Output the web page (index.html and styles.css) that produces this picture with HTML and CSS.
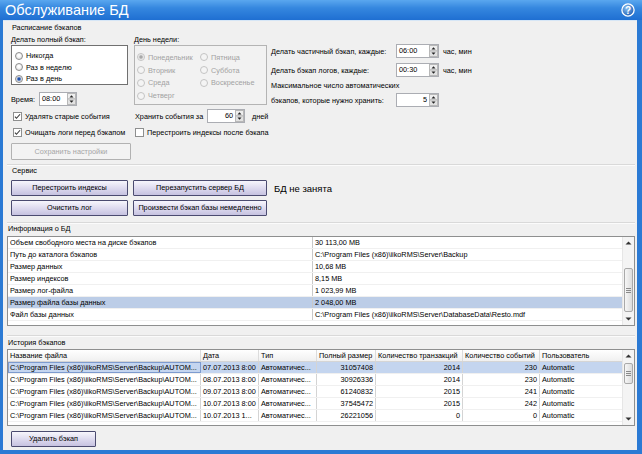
FILE: index.html
```html
<!DOCTYPE html>
<html lang="ru">
<head>
<meta charset="utf-8">
<title>Обслуживание БД</title>
<link rel="stylesheet" href="styles.css">
</head>
<body>
<div class="window">
  <div class="titlebar">
    <span class="title">Обслуживание БД</span>
    <svg class="help" width="14" height="14" viewBox="0 0 14 14"><defs><radialGradient id="hg" cx="40%" cy="35%" r="70%"><stop offset="0" stop-color="#8cc2f3"/><stop offset="1" stop-color="#1a58b0"/></radialGradient></defs><circle cx="7" cy="7" r="6.1" fill="url(#hg)" stroke="#fff" stroke-width="1.3"/><text x="7" y="10.6" text-anchor="middle" font-size="10" font-weight="bold" fill="#fff" font-family="Liberation Sans, sans-serif">?</text></svg>
  </div>
  <div class="body">
    <section class="sec sched">
      <div class="sec-title">Расписание бэкапов</div>
      <div class="sched-top">
        <div class="col1">
          <div class="lbl">Делать полный бэкап:</div>
          <div class="radiobox">
            <div class="radio"><span class="rb"></span>Никогда</div>
            <div class="radio"><span class="rb"></span>Раз в неделю</div>
            <div class="radio"><span class="rb on"></span>Раз в день</div>
          </div>
          <div class="time-row">
            <span class="time-lbl">Время:</span>
            <div class="spin w38"><span class="val">08:00</span><svg class="arr" viewBox="0 0 9 12" width="9" height="12"><rect x="0.5" y="0.5" width="8" height="5.5" fill="#eeeeee" stroke="#b8b8b8"/><rect x="0.5" y="6" width="8" height="5.5" fill="#e2e2e2" stroke="#b8b8b8"/><path d="M2.5 4.6h4L4.5 2.2z" fill="#222"/><path d="M2.5 7.4h4L4.5 9.8z" fill="#222"/></svg></div>
          </div>
        </div>
        <div class="col2">
          <div class="lbl">День недели:</div>
          <div class="daybox">
            <div class="daycol">
              <div class="radio dis"><span class="rb on"></span>Понедельник</div>
              <div class="radio dis"><span class="rb"></span>Вторник</div>
              <div class="radio dis"><span class="rb"></span>Среда</div>
              <div class="radio dis"><span class="rb"></span>Четверг</div>
            </div>
            <div class="daycol">
              <div class="radio dis"><span class="rb"></span>Пятница</div>
              <div class="radio dis"><span class="rb"></span>Суббота</div>
              <div class="radio dis"><span class="rb"></span>Воскресенье</div>
            </div>
          </div>
        </div>
        <div class="col3">
          <div class="set-row">
            <span class="set-lbl">Делать частичный бэкап, каждые:</span>
            <div class="spin w43"><span class="val">06:00</span><svg class="arr" viewBox="0 0 9 12" width="9" height="12"><rect x="0.5" y="0.5" width="8" height="5.5" fill="#eeeeee" stroke="#b8b8b8"/><rect x="0.5" y="6" width="8" height="5.5" fill="#e2e2e2" stroke="#b8b8b8"/><path d="M2.5 4.6h4L4.5 2.2z" fill="#222"/><path d="M2.5 7.4h4L4.5 9.8z" fill="#222"/></svg></div>
            <span class="unit">час, мин</span>
          </div>
          <div class="set-row r2">
            <span class="set-lbl">Делать бэкап логов, каждые:</span>
            <div class="spin w43"><span class="val">00:30</span><svg class="arr" viewBox="0 0 9 12" width="9" height="12"><rect x="0.5" y="0.5" width="8" height="5.5" fill="#eeeeee" stroke="#b8b8b8"/><rect x="0.5" y="6" width="8" height="5.5" fill="#e2e2e2" stroke="#b8b8b8"/><path d="M2.5 4.6h4L4.5 2.2z" fill="#222"/><path d="M2.5 7.4h4L4.5 9.8z" fill="#222"/></svg></div>
            <span class="unit">час, мин</span>
          </div>
          <div class="set-text">Максимальное число автоматических</div>
          <div class="set-row r4">
            <span class="set-lbl">бэкапов, которые нужно хранить:</span>
            <div class="spin w43"><span class="val num">5</span><svg class="arr" viewBox="0 0 9 12" width="9" height="12"><rect x="0.5" y="0.5" width="8" height="5.5" fill="#eeeeee" stroke="#b8b8b8"/><rect x="0.5" y="6" width="8" height="5.5" fill="#e2e2e2" stroke="#b8b8b8"/><path d="M2.5 4.6h4L4.5 2.2z" fill="#222"/><path d="M2.5 7.4h4L4.5 9.8z" fill="#222"/></svg></div>
          </div>
        </div>
      </div>
      <div class="chk-row1">
        <div class="chk c-a"><span class="cb"><svg viewBox="0 0 9 9" width="7" height="7"><path d="M1.2 4.6l2 2.2L7.8 1.6" fill="none" stroke="#3a3a3a" stroke-width="1.4"/></svg></span>Удалять старые события</div>
        <span class="keep-lbl">Хранить события за</span>
        <div class="spin w38"><span class="val num">60</span><svg class="arr" viewBox="0 0 9 12" width="9" height="12"><rect x="0.5" y="0.5" width="8" height="5.5" fill="#eeeeee" stroke="#b8b8b8"/><rect x="0.5" y="6" width="8" height="5.5" fill="#e2e2e2" stroke="#b8b8b8"/><path d="M2.5 4.6h4L4.5 2.2z" fill="#222"/><path d="M2.5 7.4h4L4.5 9.8z" fill="#222"/></svg></div>
        <span class="days">дней</span>
      </div>
      <div class="chk-row2">
        <div class="chk c-a"><span class="cb"><svg viewBox="0 0 9 9" width="7" height="7"><path d="M1.2 4.6l2 2.2L7.8 1.6" fill="none" stroke="#3a3a3a" stroke-width="1.4"/></svg></span>Очищать логи перед бэкапом</div>
        <div class="chk"><span class="cb"></span>Перестроить индексы после бэкапа</div>
      </div>
      <div class="btn disabled save">Сохранить настройки</div>
    </section>

    <section class="sec service">
      <div class="sec-title">Сервис</div>
      <div class="svc-grid">
        <div class="btn">Перестроить индексы</div>
        <div class="btn">Перезапустить сервер БД</div>
        <div class="status">БД не занята</div>
        <div class="btn">Очистить лог</div>
        <div class="btn">Произвести бэкап базы немедленно</div>
      </div>
    </section>

    <section class="sec info">
      <div class="sec-title">Информация о БД</div>
      <div class="grid info-grid">
        <div class="rows">
          <div class="irow"><span>Объем свободного места на диске бэкапов</span><span>30 113,00 MB</span></div>
          <div class="irow"><span>Путь до каталога бэкапов</span><span>C:\Program Files (x86)\iikoRMS\Server\Backup</span></div>
          <div class="irow"><span>Размер данных</span><span>10,68 MB</span></div>
          <div class="irow"><span>Размер индексов</span><span>8,15 MB</span></div>
          <div class="irow"><span>Размер лог-файла</span><span>1 023,99 MB</span></div>
          <div class="irow sel"><span>Размер файла базы данных</span><span>2 048,00 MB</span></div>
          <div class="irow"><span>Файл базы данных</span><span>C:\Program Files (x86)\iikoRMS\Server\DatabaseData\Resto.mdf</span></div>
        </div>
        <div class="vscroll info-sb">
          <div class="sb-btn"><svg width="7" height="4" viewBox="0 0 7 4"><path d="M0.5 3.5h6L3.5 0.5z" fill="#333"/></svg></div>
          <div class="sb-thumb"><svg width="5" height="5" viewBox="0 0 5 5"><path d="M0 0.5h5M0 2.5h5M0 4.5h5" stroke="#8a8a8a" stroke-width="1"/></svg></div>
          <div class="sb-space"></div>
          <div class="sb-btn"><svg width="7" height="4" viewBox="0 0 7 4"><path d="M0.5 0.5h6L3.5 3.5z" fill="#333"/></svg></div>
        </div>
      </div>
    </section>

    <section class="sec history">
      <div class="sec-title">История бэкапов</div>
      <div class="grid hist-grid">
        <div class="rows">
          <div class="hrow head"><span>Название файла</span><span>Дата</span><span>Тип</span><span>Полный размер</span><span>Количество транзакций</span><span>Количество событий</span><span>Пользователь</span></div>
          <div class="hrow sel"><span class="focus">C:\Program Files (x86)\iikoRMS\Server\Backup\AUTOM...</span><span>07.07.2013 8:00</span><span>Автоматичес...</span><span class="n">31057408</span><span class="n">2014</span><span class="n">230</span><span>Automatic</span></div>
          <div class="hrow"><span>C:\Program Files (x86)\iikoRMS\Server\Backup\AUTOM...</span><span>08.07.2013 8:00</span><span>Автоматичес...</span><span class="n">30926336</span><span class="n">2014</span><span class="n">230</span><span>Automatic</span></div>
          <div class="hrow"><span>C:\Program Files (x86)\iikoRMS\Server\Backup\AUTOM...</span><span>09.07.2013 8:00</span><span>Автоматичес...</span><span class="n">61240832</span><span class="n">2015</span><span class="n">241</span><span>Automatic</span></div>
          <div class="hrow"><span>C:\Program Files (x86)\iikoRMS\Server\Backup\AUTOM...</span><span>10.07.2013 8:00</span><span>Автоматичес...</span><span class="n">37545472</span><span class="n">2015</span><span class="n">242</span><span>Automatic</span></div>
          <div class="hrow"><span>C:\Program Files (x86)\iikoRMS\Server\Backup\AUTOM...</span><span>10.07.2013 1...</span><span>Автоматичес...</span><span class="n">26221056</span><span class="n">0</span><span class="n">0</span><span>Automatic</span></div>
        </div>
        <div class="vscroll hist-sb">
          <div class="sb-btn"><svg width="7" height="4" viewBox="0 0 7 4"><path d="M0.5 3.5h6L3.5 0.5z" fill="#333"/></svg></div>
          <div class="sb-thumb"><svg width="5" height="5" viewBox="0 0 5 5"><path d="M0 0.5h5M0 2.5h5M0 4.5h5" stroke="#8a8a8a" stroke-width="1"/></svg></div>
          <div class="sb-space"></div>
          <div class="sb-btn"><svg width="7" height="4" viewBox="0 0 7 4"><path d="M0.5 0.5h6L3.5 3.5z" fill="#333"/></svg></div>
        </div>
      </div>
      <div class="btn del">Удалить бэкап</div>
    </section>
  </div>
</div>
</body>
</html>
```
FILE: styles.css
```css
* { box-sizing: border-box; }
html, body { margin: 0; padding: 0; }
body {
  width: 642px; height: 454px; overflow: hidden;
  font-family: "Liberation Sans", Arial, sans-serif;
  font-size: 7.3px; color: #000;
}
.window {
  width: 642px; height: 454px;
  background: #2b7ad4;
  display: flex; flex-direction: column;
}
.titlebar {
  height: 20px; flex: none;
  display: flex; align-items: center; justify-content: space-between;
  padding: 0 7px 0 5px;
  background: linear-gradient(#5aa7ef 0%, #3587df 40%, #1f6fd2 100%);
  color: #fff;
}
.title { font-size: 14.5px; line-height: 20px; }
.help { display: block; }
.body {
  margin: 0 5px 4px 3px;
  height: 430px;
  background: #f0f0f0;
  padding: 0 2px 0 4px;
  border-top: 1px solid #d6e6f6;
}
.sec-title { height: 12px; line-height: 12px; padding-left: 1px; white-space: nowrap; }
.sec + .sec { border-top: 1px solid #d9d9d9; box-shadow: inset 0 1px #fbfbfb; }

/* schedule */
.sched { padding: 1px 0 3px 4px; height: 143px; }
.sched-top { display: flex; height: 73px; }
.lbl { height: 11px; line-height: 11px; white-space: nowrap; }
.col1 { width: 117px; }
.col2 { width: 133px; margin-left: 6px; }
.col3 { margin-left: 4px; padding-top: 10px; }
.radiobox {
  height: 40px; background: #fff; border: 1px solid #707070;
  padding: 4px 0 0 3px;
}
.radio { display: flex; align-items: center; height: 11.5px; white-space: nowrap; }
.rb {
  width: 8px; height: 8px; border-radius: 50%;
  border: 1px solid #8c8c8c;
  background: radial-gradient(circle at 50% 40%, #ffffff 20%, #d6d6d6 100%);
  margin-right: 3px; flex: none;
}
.rb.on { background: radial-gradient(circle, #1f4fa8 0 28%, #7c9ad0 40%, #e0e0e0 60%, #f4f4f4 100%); }
.radio.dis { color: #a2a2a2; height: 12.8px; }
.radio.dis .rb { border-color: #c4c4c4; background: #f4f4f4; }
.radio.dis .rb.on { background: radial-gradient(circle, #a8a8a8 0 30%, #d8d8d8 45%, #f4f4f4 70%); }
.daybox {
  height: 60px; border: 1px solid #b4b4b4; background: #f2f2f2;
  padding: 5px 0 0 2px; display: flex;
}
.daycol { width: 63px; }
.daycol + .daycol { width: auto; }
.time-row { display: flex; align-items: center; margin-top: 7px; height: 14px; }
.time-lbl { width: 28px; }
.spin {
  display: flex; height: 14px; background: #fff;
  border: 1px solid #abadb3; flex: none;
}
.spin .val { flex: 1; line-height: 12px; padding-left: 2px; }
.spin .val.num { text-align: right; padding-right: 2px; }
.spin .arr { display: block; flex: none; }
.w38 { width: 38px; }
.w43 { width: 43px; }
.set-row { display: flex; align-items: center; height: 14px; }
.set-row.r2 { margin-top: 5px; }
.set-row.r4 { margin-top: 1px; }
.set-lbl { width: 125px; white-space: nowrap; }
.unit { margin-left: 4px; white-space: nowrap; }
.set-text { height: 12px; line-height: 12px; margin-top: 3px; white-space: nowrap; }
.chk-row1 { display: flex; align-items: center; height: 14px; margin-top: 2px; padding-left: 2px; }
.chk-row2 { display: flex; align-items: center; height: 12px; margin-top: 3px; padding-left: 2px; }
.chk { display: flex; align-items: center; white-space: nowrap; }
.c-a { width: 122px; }
.cb {
  width: 9px; height: 9px; background: #fff; border: 1px solid #8e8f8f;
  margin-right: 3px; display: flex; align-items: center; justify-content: center; flex: none;
}
.cb svg { display: block; }
.keep-lbl { width: 72px; white-space: nowrap; }
.days { margin-left: 7px; }

.btn {
  height: 16px; line-height: 14px; text-align: center; white-space: nowrap;
  border: 1px solid #4b4b70; border-radius: 1px;
  background: linear-gradient(#f7f6fc 0%, #dedbef 50%, #c6c2e0 100%);
}
.btn.disabled { border-color: #b2b2b2; background: #f3f3f3; color: #a6a6a6; }
.save { width: 120px; height: 17px; line-height: 15px; margin-top: 5px; }

/* service */
.service { height: 58px; padding-left: 4px; }
.svc-grid {
  display: grid; grid-template-columns: 117px 134px auto;
  column-gap: 5px; row-gap: 4px; margin-top: 3px; align-items: center;
}
.status { font-size: 9.5px; padding-left: 2px; white-space: nowrap; }

/* tables */
.grid { display: flex; border: 1px solid #8e8f8f; background: #fff; }
.rows { flex: 1; overflow: hidden; }
.info { height: 113px; }
.info-grid { height: 90px; margin-top: 1px; }
.irow {
  display: grid; grid-template-columns: 305px 1fr;
  height: 12px; line-height: 12px; border-bottom: 1px solid #f0f0f0;
  white-space: nowrap;
}
.irow span { padding-left: 2px; overflow: hidden; }
.irow span:first-child { border-right: 1px solid #c9c9c9; }
.irow.sel { background: #bccde7; }
.vscroll {
  width: 12px; flex: none; display: flex; flex-direction: column;
  background: #f4f4f4; border-left: 1px solid #e6e6e6;
}
.sb-btn { height: 12px; display: flex; align-items: center; justify-content: center; flex: none; }
.sb-btn svg { display: block; }
.sb-thumb {
  flex: none; margin: 0 1px;
  background: linear-gradient(90deg, #f6f6f6, #dcdcdc);
  border: 1px solid #a9a9a9; border-radius: 2px;
  display: flex; align-items: center; justify-content: center;
}
.sb-thumb svg { display: block; }
.sb-space { flex: 1; }
.info-sb .sb-thumb { margin-top: 19px; height: 44px; }
.hist-sb .sb-thumb { margin-top: 1px; height: 21px; }

.history { padding-top: 1px; }
.hist-grid { height: 77px; }
.hrow {
  display: grid; grid-template-columns: 193px 58px 58px 59px 87px 77px 82px;
  height: 12px; line-height: 11px; white-space: nowrap;
  border-bottom: 1px solid #f0f0f0;
}
.hrow span {
  padding: 0 2px; overflow: hidden; border-right: 1px solid #d4d4d4;
}
.hrow span:last-child { border-right: none; }
.hrow .n { text-align: right; }
.hrow.head { background: linear-gradient(#ffffff, #f0f0f0); border-bottom: 1px solid #d5d5d5; }
.hrow.head span { border-right-color: #dcdcdc; }
.hrow.sel { background: #c4d5ef; }
.hrow .focus { outline: 1px solid #7d9bcf; outline-offset: -1px; }
.del { width: 85px; margin: 5px 0 0 4px; }
```
